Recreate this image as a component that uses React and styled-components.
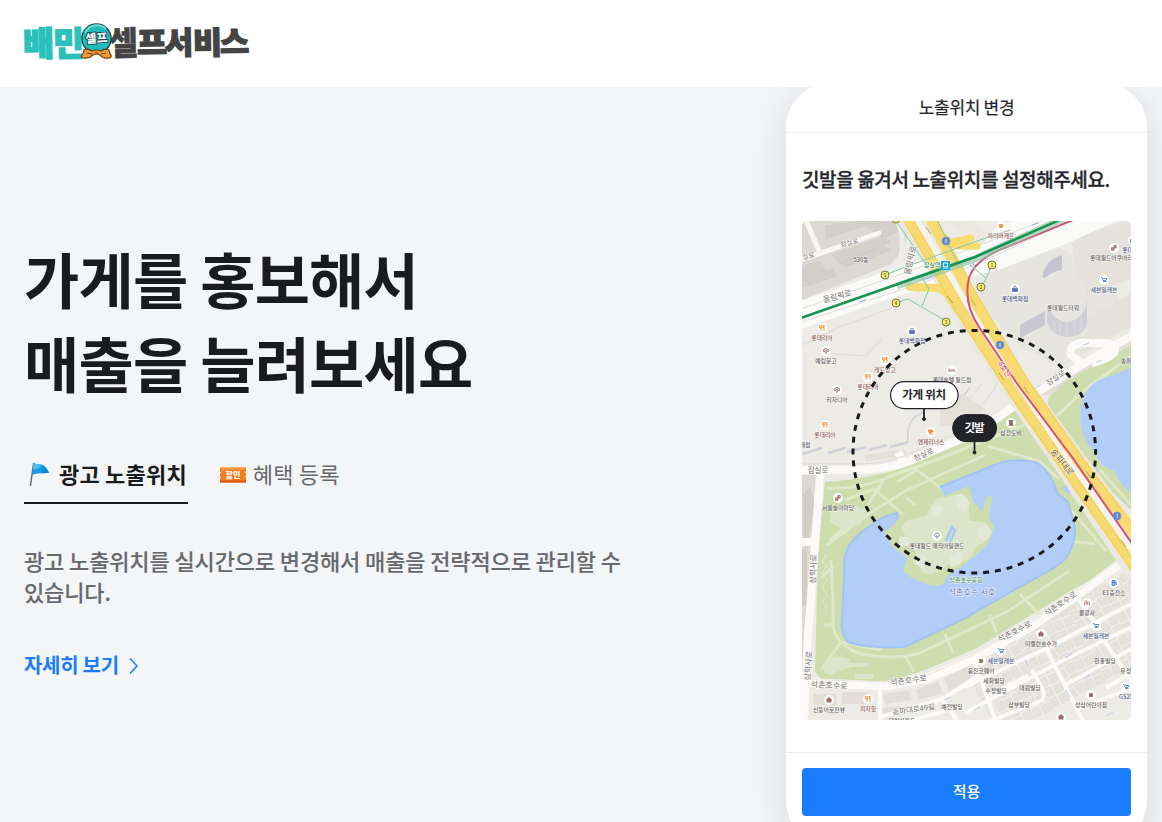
import React, { useState } from "react";
import styled, { createGlobalStyle } from "styled-components";

const GlobalStyle = createGlobalStyle`
  * {
    box-sizing: border-box;
  }

  body {
    margin: 0;
    background: #fff;
    color: #1a1b1d;
    font-family: "Noto Sans CJK KR", "Noto Sans", sans-serif;
    overflow: hidden;
  }

  button {
    font-family: inherit;
  }
`;

const Page = styled.div`
  height: 822px;
  display: flex;
  flex-direction: column;
  overflow: hidden;
`;

const Header = styled.header`
  flex: 0 0 87px;
  padding: 12px 14px;
  background: #fff;

  svg {
    display: block;
  }
`;

const Promo = styled.section`
  flex: 1;
  min-height: 0;
  display: flex;
  justify-content: space-between;
  align-items: flex-start;
  padding: 0 15px 0 24px;
  background: #f4f5f7;
  overflow: hidden;
`;

const Copy = styled.div`
  width: 610px;
  padding-top: 149px;
`;

const Title = styled.h1`
  margin: 0;
  font-size: 60px;
  font-weight: 700;
  line-height: 84px;
  letter-spacing: -0.75px;
`;

const Tabs = styled.div`
  display: flex;
  gap: 27px;
  margin-top: 47px;
`;

const Tab = styled.button`
  display: flex;
  align-items: center;
  gap: 4px;
  height: 53px;
  padding: 0 1px 7px 0;
  border: none;
  border-bottom: 2px solid ${props => (props.$active ? "#1a1b1d" : "transparent")};
  background: none;
  color: ${props => (props.$active ? "#1a1b1d" : "#67696c")};
  font-size: 22px;
  font-weight: ${props => (props.$active ? 700 : 400)};
  line-height: 31px;
  letter-spacing: 0.2px;
  white-space: nowrap;
  cursor: pointer;
`;

const Description = styled.p`
  margin: 41px 0 0;
  color: #67696c;
  font-size: 22px;
  font-weight: 500;
  line-height: 31px;
  letter-spacing: -0.13px;
  -webkit-text-stroke: 0.1px;
`;

const More = styled.a`
  display: inline-flex;
  align-items: center;
  gap: 9px;
  margin-top: 44px;
  color: #1a7cff;
  font-size: 20px;
  font-weight: 700;
  line-height: 28px;
  letter-spacing: -0.3px;
  text-decoration: none;
`;

const Phone = styled.div`
  flex: 0 0 361px;
  height: 762px;
  margin-top: -4px;
  border-radius: 44px;
  background: #fff;
  color: #25262c;
  box-shadow: 0 8px 36px rgba(20, 24, 32, 0.12);
`;

const PhoneTitle = styled.div`
  height: 50px;
  padding-top: 12px;
  border-bottom: 1px solid #ebecf2;
  font-size: 17px;
  line-height: 24px;
  letter-spacing: -0.3px;
  text-align: center;
  -webkit-text-stroke: 0.2px;
`;

const PhoneBody = styled.div`
  height: 619px;
  padding: 32px 16px 0;
`;

const Guide = styled.h2`
  margin: 0 0 28px;
  font-size: 19px;
  font-weight: 500;
  line-height: 28px;
  letter-spacing: -0.37px;
  white-space: nowrap;
  -webkit-text-stroke: 0.3px;
`;

const MapView = styled.svg`
  display: block;
  width: 100%;
  height: 499px;
  border-radius: 5px;
`;

const PhoneFooter = styled.div`
  border-top: 1px solid #ededf0;
  padding: 15px 16px 0;
`;

const Apply = styled.button`
  display: block;
  width: 100%;
  height: 48px;
  padding: 0 0 4px;
  border: none;
  border-radius: 4px;
  background: #1a7cff;
  color: #fff;
  font-size: 15px;
  font-weight: 500;
  cursor: pointer;
`;

const logoLetters = [
  { char: "배", x: 1, y: 36, size: 34, width: 31, color: "#2ac1bc" },
  { char: "민", x: 31, y: 36, size: 34, width: 31, color: "#2ac1bc" },
  { char: "셀", x: 87, y: 35, size: 33, width: 29, color: "#444" },
  { char: "프", x: 115, y: 34, size: 31, width: 30, color: "#444" },
  { char: "서", x: 143, y: 34, size: 31, width: 28, color: "#444" },
  { char: "비", x: 171, y: 34, size: 31, width: 29, color: "#444" },
  { char: "스", x: 198, y: 33, size: 30, width: 29, color: "#444" }
];

const Logo = () => (
  <svg width="250" height="62" viewBox="-8 -8 250 62" fontWeight="900">
    {logoLetters.map(({ char, x, y, size, width, color }) => (
      <text
        key={char}
        x={x}
        y={y}
        fontSize={size}
        textLength={width}
        lengthAdjust="spacingAndGlyphs"
        fill={color}
        stroke={color}
        strokeWidth={char === "셀" ? 0.5 : 1.4}
        transform={`rotate(-1 ${x + 14} 24)`}
      >
        {char}
      </text>
    ))}
    <circle cx="74.5" cy="18.5" r="14.6" fill="#1fbdb9" stroke="#24494b" strokeWidth="1.4" />
    <path d="M63 13a13 13 0 0 1 21-4" fill="none" stroke="#69dcd9" strokeWidth="2" />
    <path
      d="M62 30q4-2 8 1 5-2 9 0 4-3 8-1 0 3 2 5 1 3-3 3-5 1-8-3-4-2-7 0-4 4-9 3-4 0-2-3 2-2 2-5z"
      fill="#f59a31"
      stroke="#653c19"
      strokeWidth="1.2"
    />
    <path d="M65 33l5 1M84 33l-5 1M73 33q2-2 3 1" fill="none" stroke="#653c19" />
    <text
      x="74.5"
      y="22.5"
      fontSize="12"
      textAnchor="middle"
      fill="#e8f6f6"
      stroke="#194649"
      strokeWidth="1.8"
      paintOrder="stroke"
      transform="rotate(-4 74 18)"
    >
      셀프
    </text>
  </svg>
);

const FlagIcon = () => (
  <svg width="31" height="30" viewBox="0 0 31 30">
    <path d="M9.6 5L6.4 28" stroke="#64676b" strokeWidth="1.4" />
    <path
      d="M9.6 5c4 2 7 0 10.400 3 2.500 2 3 4 5 6.800-6 1-9-.8-17.200 2.200z"
      fill="#169bea"
    />
    <path d="M9.600 5c4 2 6 .5 8.500 2-2 3-5 4-9.100 5z" fill="#4abdf6" />
    <path d="M18 7q4 1 7 7.800-4 .6-7 .4z" fill="#0d8bd9" />
  </svg>
);

const CouponIcon = () => (
  <svg width="34" height="30" viewBox="0 0 34 30">
    <g transform="translate(0 1.500)">
      <path d="M5 8h26v4q-2 1 0 2v2q-2 1 0 2v5H5v-4q2-1 0-2v-3q2-1 0-2z" fill="#f57d20" />
      <path d="M6 8h24v2H6z" fill="#ff9d45" />
      <path d="M5 21h26v2H5z" fill="#dd590c" />
      <text x="18" y="18" fontSize="8" fontWeight="900" textAnchor="middle" fill="#fff">
        할인
      </text>
    </g>
  </svg>
);

const Chevron = () => (
  <svg width="12" height="18" viewBox="0 0 12 18">
    <path d="M2 2.500l7 7.500-7 7.500" fill="none" stroke="#1a7cff" strokeWidth="1.5" />
  </svg>
);

const places = [
  { name: "파리바게뜨", x: 1001, y: 237, icon: "orange" },
  { name: "롯데월드", x: 1133, y: 251, icon: "shop" },
  { name: "롯데월드아쿠아리움", x: 1114, y: 259, icon: "brown" },
  { name: "세븐일레븐", x: 1104, y: 291, icon: "cart" },
  { name: "롯데백화점", x: 1015, y: 300, icon: "shop" },
  { name: "롯데월드타워", x: 1063, y: 309 },
  { name: "530동", x: 861, y: 261 },
  { name: "롯데리아", x: 822, y: 339, icon: "food" },
  { name: "예림문고", x: 826, y: 362, icon: "round" },
  { name: "롯데백화점", x: 912, y: 342, icon: "shop" },
  { name: "레드망고", x: 885, y: 371, icon: "food" },
  { name: "롯데리아", x: 868, y: 388, icon: "food" },
  { name: "롯데호텔 월드점", x: 952, y: 381, icon: "hotel" },
  { name: "키자니아", x: 837, y: 401, icon: "round" },
  { name: "롯데리아", x: 825, y: 436, icon: "food" },
  { name: "마트롯데점", x: 797, y: 446 },
  { name: "엔제리너스", x: 931, y: 443, icon: "cafe" },
  { name: "삼전도비", x: 1011, y: 434, icon: "monument" },
  { name: "서울놀이마당", x: 838, y: 509, icon: "brown" },
  { name: "롯데월드 매직아일랜드", x: 937, y: 547, icon: "leaf" },
  { name: "송파", x: 1126, y: 362 },
  { name: "E1충전소", x: 1114, y: 594, icon: "gas" },
  { name: "불광사", x: 1087, y: 614, icon: "temple" },
  { name: "세븐일레븐", x: 1096, y: 637, icon: "cart" },
  { name: "미켈란호수가", x: 1041, y: 645, icon: "home" },
  { name: "세븐일레븐", x: 1001, y: 662, icon: "cart" },
  { name: "웅진코웨이", x: 981, y: 672, icon: "square" },
  { name: "세화빌딩", x: 994, y: 682 },
  { name: "수정빌딩", x: 996, y: 692 },
  { name: "대원빌딩", x: 1030, y: 689 },
  { name: "삼부빌딩", x: 1019, y: 706 },
  { name: "한홍빌딩", x: 1105, y: 662 },
  { name: "유성빌딩", x: 1131, y: 672 },
  { name: "GS25", x: 1126, y: 698, icon: "cart" },
  { name: "성심어린이집", x: 1091, y: 706, icon: "square" },
  { name: "신동아로잔뷰", x: 829, y: 711, icon: "home" },
  { name: "피자헛", x: 868, y: 710, icon: "food" },
  { name: "예전빌딩", x: 952, y: 708 },
  { name: "", x: 1061, y: 728, icon: "home" },
  { name: "대림아파트", x: 902, y: 722 }
];

const roadNames = [
  { name: "잠실로", x: 850, y: 245, angle: -14, size: 6.5 },
  { name: "잠실로", x: 806, y: 259, angle: -14, size: 6.5 },
  { name: "올림픽로", x: 838, y: 299, angle: -15, size: 8 },
  { name: "올림픽로", x: 913, y: 261, angle: -77, size: 8 },
  { name: "잠실로", x: 818, y: 473, angle: 0, size: 7.5 },
  { name: "잠실로", x: 925, y: 457, angle: -25, size: 7.5 },
  { name: "잠실로", x: 1057, y: 380, angle: -34, size: 7.5 },
  { name: "삼학사로", x: 816, y: 569, angle: -88, size: 8 },
  { name: "삼학사로", x: 811, y: 666, angle: -86, size: 8 },
  { name: "석촌호수로", x: 829, y: 688, angle: 2, size: 8 },
  { name: "석촌호수로", x: 909, y: 683, angle: -8, size: 8 },
  { name: "석촌호수로", x: 1016, y: 634, angle: -27, size: 8 },
  { name: "석촌호수로", x: 1062, y: 606, angle: -34, size: 8 },
  { name: "송파대로49길", x: 914, y: 712, angle: -8, size: 7.5 },
  { name: "송파대로", x: 1060, y: 464, angle: 51, size: 8.5, color: "#79582c" },
  { name: "석촌호수 서호", x: 972, y: 594.5, angle: 0, size: 8.2, color: "#607cac" },
  { name: "석촌호수공원", x: 966, y: 582, angle: 0, size: 6, color: "#4c8a43" },
  { name: "잠실역", x: 932, y: 267, angle: 0, size: 6, color: "#187b75" }
];

const exits = [
  [896, 219, 1],
  [885, 275, 5],
  [896, 303, 4],
  [946, 322, 3],
  [992, 265, 1],
  [981, 287, 2]
];

const iconColor = {
  shop: "#6670b6",
  cart: "#4775ce",
  gas: "#4775ce",
  brown: "#9b7569",
  round: "#9b7569",
  monument: "#8a6f66",
  square: "#956c62",
  home: "#956c62",
  temple: "#aa6a58",
  hotel: "#ad6c64",
  leaf: "#79818b"
};

const PlaceIcon = ({ type, x, y }) => {
  const color = iconColor[type] || "#f68b32";
  return (
    <g transform={`translate(${x} ${y})`} fill={color} stroke={color} strokeWidth=".8">
      <circle r="5" fill="#fff" stroke="none" opacity=".9" />
      {type === "food" && (
        <path d="M-2.5-3v3q1.3 1 2.5 0v-3M-1.2-3v6M2-3v6M2-3Q0 0 2 0" fill="none" />
      )}
      {type === "cart" && (
        <>
          <path d="M-3-2.5h1l1 3h3l1-2h-4M-1 1.5h3.5" fill="none" />
          <path d="M-.8 2.8h.2M2 2.8h.2" />
        </>
      )}
      {type === "shop" && (
        <>
          <path d="M-2.5-.5h5v3h-5z" />
          <path d="M-1.3-.8q0-2.2 1.3-2.2t1.3 2.2" fill="none" />
        </>
      )}
      {type === "home" && <path d="M-2.5-.3L0-2.5 2.5-.3H2v2.5H.7V1H-.7v1.2H-2v-2.5z" />}
      {type === "gas" && <path d="M-2-2.5h3v2h-3zM-2-.5h3v3h-3zM1-1l1.5 1v2" fillOpacity=".5" />}
      {type === "hotel" && <path d="M-3-2v4M-3 1h6v1M-2 0h4v-1" fill="none" />}
      {type === "cafe" && <path d="M-2.5-2h4v2q-2 2-4 0zM2-1h1M-2 2h4" />}
      {(type === "orange" || type === "square") && <path d="M-1.5-1.5h3v3h-3z" />}
      {type === "monument" && <path d="M-2.5-2.5h5M-1.5-2v4h3v-4zM-2.5 2.5h5" />}
      {type === "round" && (
        <path d="M-2.5-1.5q2.5-2.5 5 0v2H1l-1 2-1-2h-1.500zM-1-.5h2" fillOpacity=".35" />
      )}
      {type === "leaf" && <path d="M0 3V-1M-2.5 0q0-3 2.5-3t2.5 3L0 1z" fill="none" />}
      {type === "temple" && (
        <path d="M-2.5-2H0v2h2.500v2.500M2.500-2v1M0 0v2.500M-2.500 2.500V0H0" fill="none" />
      )}
      {type === "brown" && (
        <path d="M-.2-2.500h2.500V0H-.2zM-2.500-.2H0v2.500h-2.500z" fillOpacity=".7" />
      )}
    </g>
  );
};

// one short terrace of houses, repeated along the southern streets
const houses = [];
for (let row = 0; row < 8; row += 1) {
  for (let col = 0; col < 19; col += 1) {
    houses.push({ x: col * 10, y: row * 11 + (col % 3), width: 7 + (col % 2), height: 8 });
  }
}

const BusStop = () => (
  <g>
    <rect x="941" y="261" width="9" height="9" rx="1" fill="#14a7dd" />
    <path d="M943.5 263h4v4h-4zM944 268v1M947 268v1" fill="none" stroke="#fff" />
  </g>
);

const Terrain = () => (
  <g>
    <path d="M802 221h103q5 14-2 29l-12 14-89 36z" fill="#dcd9d3" />
    <g fill="#d3d0ca" stroke="#c9c7c8" strokeWidth=".5">
      <path d="M825 226l35-5h20l-53 17zM832 255l51-18 8 5-51 22zM803 266l16-5 9 12-25 9zM803 278l29-9 5 7-34 11zM841 262l42-16 8 4-46 17zM864 224l28-3 7 10-16 7z" />
    </g>
    <path
      d="M805 218l15 35M798 261l81-28"
      fill="none"
      stroke="#f8f7f3"
      strokeWidth="5"
      strokeLinecap="round"
    />
    <path d="M981 306q-6-40 25-48l43-16 48 25 34 50v10l-70 40-40-20z" fill="#e7e5df" />
    <path d="M1071 239l60-20v60l-50 18zM1086 318l45-24v30l-46 27z" fill="#e5e2dc" />
    <path d="M1030 396l101-60v34l-42 20-21 10-18-5z" fill="#e3dfd7" />
    <path d="M802 475h14l-7 105v70l-7 30z" fill="#ddd8d0" />
    <path d="M803 494l7-7 5 18-7 38h-5zM802 550h5v55h-5z" fill="#d1cec7" />
    <g fill="none" stroke="#d1cfd8" strokeWidth="2.5">
      <path d="M802 454l20-6M828 453l17-5M847 452l19-5M869 450l18-5M890 447l18-5" />
      <path d="M908 442q-2-22 12-28l15-15M958 404l12-17" strokeWidth="1.5" />
    </g>
    <path d="M864 455l40-6 4 6-42 7zM940 403l22-10 23 16-20 15-25 3z" fill="#e4e1d9" />
    <path
      d="M802 345l40-19 50-18M825 353l41 3 16-17M990 345q17 20 4 45l-16 19M967 402l15-18"
      fill="none"
      stroke="#dedbd5"
      strokeWidth="1"
    />
  </g>
);

const Lake = () => (
  <g>
    <path
      d="M825 482q30-2 50-7 45-8 75-32l65-38 43 63 43 60 24 33-56 31-94 57-50 21-40 13-63-3-7-8 3-117z"
      fill="#cdddad"
    />
    <path d="M1048 398l17-16 66-37v165l-36-34-47-48z" fill="#cdddad" />
    <g fill="none" stroke="#dfe8c9" strokeWidth="3">
      <path d="M831 560q3 55 2 67 5 18 25 26 32 8 62 0l88-42 61-40" />
      <path d="M826 488q37 2 70-14 40-13 77-29l51-20M827 545l43-32 35-22 80-36M845 500l30-11 41 38M906 498l29 20M897 482l20-12 25 19M830 540l33-28 21-32M988 446l51 15 20 18" />
      <path d="M821 578l13-12M824 625h9M841 642l-20 28M841 642l40 8M905 655l9 17M945 634l8 19M989 615l8 18M1020 594l26 28M1060 540l35 4M1072 511l34 40M1067 486l35 50M1050 425l37 35M1100 470l31 35" />
      <path d="M1053 419l33-30 45-33" />
    </g>
    <path
      d="M897 514q-17 3-28 13-20 12-24 29l-3 64q-2 13 6 22 6 5 20 4 20 3 37 1l60-29 67-38q28-14 34-22 10-15 9-30l-7-26-11-9q-4-18-19-30-17-5-36-1l-62 25 6 12-18 10-26 15z"
      fill="#b2cef8"
    />
    <path
      d="M898 522l-1-9q-15 3-28 14-20 12-24 29l-3 64q-2 13 6 22 15 6 57 5l60-29 67-38q28-14 34-22 10-15 9-30l-7-26-11-9q-4-18-19-30-17-5-36-1l-62 25"
      fill="none"
      stroke="#a2c3f3"
      strokeWidth="2"
    />
    <path d="M1131 368v125q-8-5-17-22l-12-6-17-26q-8-21-3-37 3-14 17-22z" fill="#b2cef8" />
    <path d="M1062 488l32-22 6 8-32 20z" fill="#b2cef8" />
    <path
      d="M894 524l15-17 38-12 22-9 4 15 9 10 5-15 5 1-3 20 5 10-5 16-15 14-19 14q-12 7-10 12-12 6-20 0l-13-5-9-7 4-13-17-14-6-12z"
      fill="#cdddad"
    />
    <path
      d="M905 535q-10-9 6-16l15-3 9-17 20-4 13 8 2 18 16 1 5 15-16 11-5 11-21 5q-17 15-27 8l-6-20z"
      fill="#dce5cc"
    />
    <g fill="#e4e8d8">
      <path d="M931 508l9-4 4 6-10 6zM955 495l7-2 8 10-4 10-8-4zM979 529l8-5 5 8-6 9-7-4zM950 559q4-9 12-7 3 7-3 13l-9 2zM913 562l9-7 6 5-5 9zM899 537h10v9h-10z" />
    </g>
    <path d="M950 542l5-11-3-4-6 14" fill="none" stroke="#a9c8f2" strokeWidth="3" />
    <path d="M837 506h20l9 8-6 11-17 5-13-8v-8z" fill="#dce5ca" />
    <path d="M824 665l10-9 16 3v9l-12 3-6 5-8-4zM855 674h19v5h-19zM844 663h24v4h-24z" fill="#dce5ca" />
    <path
      d="M827 555l-5 6 5 5-5 7 5 7-5 7 5 8-5 7 5 7"
      fill="none"
      stroke="#dce6c7"
      strokeWidth="1.5"
    />
  </g>
);

const Streets = () => (
  <g fill="none" strokeLinejoin="round">
    <g clipPath="url(#south)">
      <g transform="translate(960 660) rotate(-28)" fill="#e6e3dc" stroke="#dbd7d0" strokeWidth=".5">
        {houses.map(house => (
          <rect key={`${house.x}-${house.y}`} {...house} />
        ))}
      </g>
      <path
        d="M813 694h24v11h-24zM842 692h28v12h-28zM883 694l26-4 3 10-27 4zM916 690l22-9 5 12-24 7zM944 678l23-11 4 12-22 12zM883 708l17-2v9h-17z"
        fill="#e2ded7"
      />
    </g>
    <g stroke="#fbfaf8">
      <path
        d="M965 687l80-38 86-45M965 713l89-48 77-38M1065 685l66-36M1077 709l54-21M1032 670l12 22-1 8-55 22M990 695l38-19M972 655l24 67M1045 646l38 75M1102 638l31 45M1076 596l24 34M1106 688l20-12"
        strokeWidth="4"
      />
      <path d="M880 684v38M880 717l63-18 36-24M904 722l60-16M942 699l15 21" strokeWidth="4" />
      <path d="M820 474l-5 70-7 90-4 88M802 542h12" strokeWidth="8" />
      <path d="M798 682l87 4 43-8 47-20 57-32 43-29 60-45" strokeWidth="9" />
      <path
        d="M796 470h66q34-2 54-12l60-25 40-28 41-25 34-21 44-25M903 461l-5-9M1081 363l-10-8q-3-9 10-12h24q13 1 9 10-6 6-22 10"
        strokeWidth="8"
      />
    </g>
    <path d="M802 464h60q31-1 53-13l58-25" stroke="#dedbd3" />
    <path d="M798 679l87 3 43-7 47-21 57-32 43-29 60-45" stroke="#d8d6d1" strokeWidth=".6" />
    <g stroke="#b8c9ef" strokeWidth="1">
      <path d="M1000 390l6-3M1036 388l5-3M1083 345l6-2M1096 362l6-2M1025 660l3 6M1065 658l7-4M1084 678l7-4M1066 690l4 7M1106 716l7-4M944 700l6-3M974 710l6-3" />
    </g>
  </g>
);

const Highways = () => (
  <g fill="none">
    <path d="M798 302l177-61 36-20h105l-50 23-65 25-100 26-103 35z" fill="#fafaf8" />
    <path d="M798 310l106-37 71-26 75-29M798 323l106-34 71-24 92-43" stroke="#dddcd7" />
    <path d="M896 215q12 32 1 51l-12 9" stroke="#eeece7" strokeWidth="5" />
    <path
      d="M904 213l66 112 45 70 55 80 68 102M922 213l47 81 52 89 57 78 64 86M953 215l30 28"
      stroke="#ebe8e0"
      strokeWidth="18"
    />
    <path d="M914 218l54 91 50 75 55 82 64 92" stroke="#f7f4eb" strokeWidth="8" />
    <g stroke="#f8db70" strokeLinecap="round">
      <path d="M906 216l62 107 46 71 54 78 68 98" strokeWidth="10" />
      <path d="M929 216l40 75 55 92 55 78 59 77" strokeWidth="11" />
      <path d="M910 287l28 1q9 3 17 18l13 17" strokeWidth="8" />
      <path d="M937 228q9 16 23 18h17M943 244l28-6" strokeWidth="7" />
    </g>
    <path
      d="M911 216l61 103 46 71 52 78 67 98M901 216l62 107 46 71 54 78 70 100M934 216l41 75 55 92 55 78 52 70"
      stroke="#e9c65d"
      strokeWidth=".7"
    />
    <path
      d="M1078 218l-81 33q-23 11-28 27-6 25 10 49l39 58 54 72 61 88"
      stroke="#d74e76"
      strokeWidth="2"
    />
    <path d="M896 221l29 42M885 275l20-8 75-27 30-10M896 303l12-4 38 22M922 306l7-17-8-13M938 221l19 42M992 265l-6 14-5 9M986 278l-16-13" stroke="#8ac7a6" />
    <path d="M897 286l78-27 32-15 60-27" stroke="#8fc7a6" strokeWidth="7" opacity=".65" />
    <path d="M798 319l177-62 32-14 57-25" stroke="#149353" strokeWidth="2.5" />
    <path
      d="M926 227l5 7M947 296l6 7M971 299l5 7M999 373l5 7M1024 387l5 7M1086 471l5 7M1121 540l5 7"
      stroke="#a98f4f"
      strokeWidth=".8"
    />
    <path d="M859 302l7-2M926 279l6-2M1032 225l6-2M973 263l2 5" stroke="#8ea9e8" />
    <g fill="#5f7fc8" stroke="#8198cd">
      <circle cx="946" cy="241" r="4" />
      <circle cx="1000" cy="345" r="4" />
      <circle cx="1117" cy="516" r="4" />
    </g>
    <g fill="#fff" fontSize="5" textAnchor="middle">
      <text x="946" y="243">8</text>
      <text x="1000" y="347">8</text>
      <text x="1117" y="518">3</text>
    </g>
  </g>
);

const Tower = () => (
  <g>
    <path d="M1003 264q8-16 28-17l20 3 10 6-19 21 5 4-3 31-24 12-17-20z" fill="#e7e5e0" />
    <path d="M1003 306l17 18v14l-17-20z" fill="#e6e7dc" />
    <path d="M1020 325l25-14v14l-25 13z" fill="#c8c7d2" />
    <path d="M1042 277q4-18 20-22v15q-9 1-17 8z" fill="#c4c3d1" />
    <path d="M1047 307v16q5 13 20 14 18-1 20-15v-23z" fill="#d0cfd7" />
    <path d="M1054 320v13M1060 322v14M1067 322v15M1074 321v14M1081 316v14" stroke="#dcdbe0" />
    <ellipse cx="1067" cy="297" rx="20" ry="25" fill="#e7e5e1" />
  </g>
);

const LocationMap = () => (
  <MapView
    viewBox="802 221 329 499"
    preserveAspectRatio="none"
    role="img"
    aria-label="노출위치 지도"
  >
    <defs>
      <clipPath id="south">
        <path d="M802 688l83 2 43-8 47-20 57-32 43-29 57-44v163H802z" />
      </clipPath>
    </defs>
    <rect x="802" y="221" width="330" height="499" fill="#edebe6" />
    <Terrain />
    <Lake />
    <Streets />
    <Tower />
    <Highways />
    <BusStop />
    <g fontSize="5" textAnchor="middle">
      {exits.map(([x, y, number]) => (
        <g key={`${x}-${y}`}>
          <circle cx={x} cy={y} r="4" fill="#f4ee62" stroke="#77764e" />
          <text x={x} y={y + 2} fill="#4d4d31">
            {number}
          </text>
        </g>
      ))}
    </g>
    <g textAnchor="middle" stroke="#fff" strokeWidth="1.2" paintOrder="stroke" strokeOpacity=".75">
      {roadNames.map(({ name, x, y, angle, size, color = "#77736e" }) => (
        <text
          key={`${x}-${y}`}
          x={x}
          y={y}
          fontSize={size}
          fill={color}
          transform={`rotate(${angle} ${x} ${y})`}
        >
          {name}
        </text>
      ))}
      <text x="1005" y="372" fontSize="7" fill="#c42e64" transform="rotate(57 1005 369)">
        8호선
      </text>
    </g>
    {places.map(({ name, x, y, icon }) => (
      <g key={`${x}-${y}`}>
        {icon && <PlaceIcon type={icon} x={x} y={y - 11} />}
        <text
          x={x}
          y={y + 0.5}
          fontSize="5.8"
          fontWeight="500"
          textAnchor="middle"
          fill={
            ["food", "orange", "cafe"].includes(icon)
              ? "#8e6053"
              : ["shop", "cart"].includes(icon)
              ? "#56608b"
              : "#66615e"
          }
          stroke="#fff"
          strokeWidth="1"
          strokeOpacity=".7"
          paintOrder="stroke"
        >
          {name}
        </text>
      </g>
    ))}
    <circle
      cx="974.3"
      cy="451.7"
      r="121.3"
      fill="none"
      stroke="#17191c"
      strokeWidth="3"
      strokeDasharray="6 5.909"
      strokeDashoffset="3"
    />
    <g stroke="#222329" strokeWidth="1.8">
      <path d="M924 408v10" />
      <circle cx="924" cy="419" r="1.5" fill="#222329" strokeWidth="1" />
      <rect x="890.6" y="381.6" width="67.5" height="27" rx="13.5" fill="#fff" strokeWidth="1.2" />
      <path d="M974.5 441v11" />
      <circle cx="974.5" cy="452.5" r="1.5" fill="#222329" strokeWidth="1" />
      <rect x="952.6" y="414.6" width="44" height="27" rx="13.5" fill="#222329" strokeWidth="1" />
    </g>
    <g fontSize="11.5" fontWeight="600" textAnchor="middle">
      <text x="924.2" y="399" fill="#222329" textLength="44">
        가게 위치
      </text>
      <text x="974.5" y="432" fill="#fff" textLength="20">
        깃발
      </text>
    </g>
  </MapView>
);

const App = () => {
  const [tab, setTab] = useState("location");

  return (
    <Page>
      <GlobalStyle />
      <Header>
        <Logo />
      </Header>
      <Promo>
        <Copy>
          <Title>
            가게를 홍보해서
            <br />
            매출을 늘려보세요
          </Title>
          <Tabs>
            <Tab $active={tab === "location"} onClick={() => setTab("location")}>
              <FlagIcon />
              광고 노출위치
            </Tab>
            <Tab $active={tab === "benefit"} onClick={() => setTab("benefit")}>
              <CouponIcon />
              혜택 등록
            </Tab>
          </Tabs>
          <Description>
            광고 노출위치를 실시간으로 변경해서 매출을 전략적으로 관리할 수 있습니다.
          </Description>
          <More href="#">
            자세히 보기
            <Chevron />
          </More>
        </Copy>
        <Phone>
          <PhoneTitle>노출위치 변경</PhoneTitle>
          <PhoneBody>
            <Guide>깃발을 옮겨서 노출위치를 설정해주세요.</Guide>
            <LocationMap />
          </PhoneBody>
          <PhoneFooter>
            <Apply>적용</Apply>
          </PhoneFooter>
        </Phone>
      </Promo>
    </Page>
  );
};

export default App;
